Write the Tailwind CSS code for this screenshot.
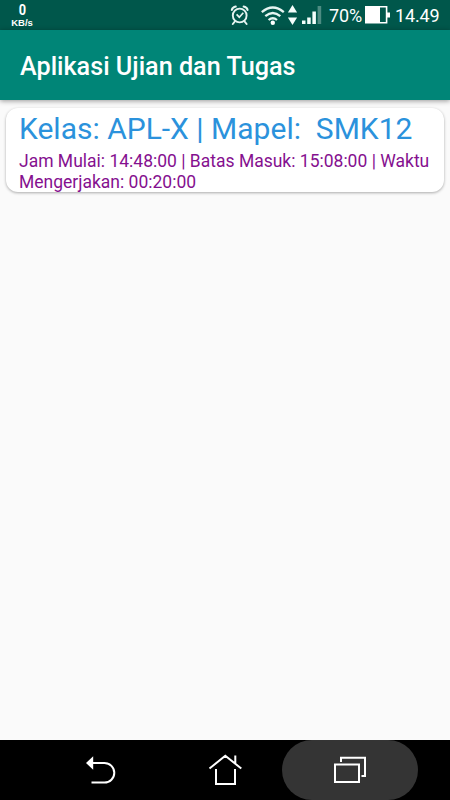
<!DOCTYPE html>
<html lang="id">
<head>
  <meta charset="UTF-8" />
  <meta name="viewport" content="width=device-width, initial-scale=1.0"/>
  <title>Aplikasi Ujian dan Tugas</title>

  <!-- Tailwind CSS -->
  <script src="https://cdn.jsdelivr.net/npm/@tailwindcss/browser@4"></script>

  <style>
    body {
      font-family: Roboto, "Liberation Sans", sans-serif;
    }
  </style>
</head>

<body class="h-screen flex flex-col overflow-hidden bg-[#fafafa]">
  <!-- Status bar -->
  <div class="h-[30px] shrink-0 bg-[#00574b] text-white flex justify-between items-start pl-[11px] pr-[10px]">
    <div class="w-[22px] pt-[3px] flex flex-col items-center font-bold">
      <span class="text-[15px] leading-[15px] scale-x-85">0</span>
      <span class="text-[9.5px] leading-[10px] whitespace-nowrap font-['Liberation_Sans']">KB/s</span>
    </div>

    <div class="h-[30px] flex items-center">
      <!-- Alarm, wifi, data, signal -->
      <svg class="w-[98px] h-[30px] shrink-0" viewBox="230 0 98 30" fill="none" stroke="#e6f4f1">
        <circle cx="239.7" cy="15.5" r="6.9" stroke-width="1.9"/>
        <path d="M231.8 10q.6-2.8 4-3.4M247.6 10q-.6-2.8-4-3.4M234.8 21.5l-2 2.5M244.6 21.5l2 2.5" stroke-width="2" stroke-linecap="round"/>
        <path d="M236.6 14.4l2.7 2.8 4-4.4" stroke-width="1.7"/>
        <path d="M261.8 12.2Q272.8 2.8 283.8 12.2M265.3 16.2Q272.8 9.8 280.3 16.2M268.6 20Q272.8 16.4 277 20" stroke-width="2.3"/>
        <circle cx="272.8" cy="22.8" r="2.2" fill="#fff" stroke="none"/>
        <path d="M292.5 5l4.6 7.5h-9.2zM292.5 25l4.6-7.5h-9.2z" fill="#f4fffc" stroke="none"/>
        <path d="M302 20.5h3.5V24H302zM307.2 17.5h3.5V24h-3.5zM312.4 11.5h3.5V24h-3.5z" fill="#f4fffc" stroke="none"/>
        <path d="M317.6 6h3.6v18h-3.6z" fill="#4d8c82" stroke="none"/>
      </svg>
      <span class="w-[37px] pl-[1px] text-[18px] leading-none pt-[1px] tracking-[-0.1px]">70%</span>
      <svg class="w-[26px] h-[30px] shrink-0" viewBox="365 0 26 30" fill="none">
        <path d="M365.8 6.8h20.8v15.9h-20.8z" stroke="#fff" stroke-width="1.6"/>
        <path d="M366 7h14v15.5h-14z" fill="#fff"/>
        <path d="M387 12.5h3v5h-3z" fill="#fff"/>
      </svg>
      <span class="w-[45px] ml-[4px] text-[18px] leading-none pt-[1px] tracking-[-0.15px] whitespace-nowrap">14.49</span>
    </div>
  </div>

  <!-- App bar -->
  <header class="h-[70px] shrink-0 bg-[#008577] text-white flex items-center px-5 pt-[4px] shadow-[0_1px_5px_rgba(0,0,0,0.4)]">
    <h1 class="text-[25.2px] font-medium leading-none whitespace-nowrap">Aplikasi Ujian dan Tugas</h1>
  </header>

  <main class="flex-1 px-[6px] pt-2">
    <!-- Exam card -->
    <section class="h-[84px] bg-white rounded-[12px] pl-[13px] pt-[3px] shadow-[0_1px_3px_rgba(0,0,0,0.32)]">
      <h2 class="text-[30px] leading-[36px] text-[#2b92dc] whitespace-pre">Kelas: APL-X | Mapel:  SMK12</h2>
      <p class="mt-[4px] text-[17.5px] leading-[20.5px] text-[#85108f] whitespace-nowrap">Jam Mulai: 14:48:00 | Batas Masuk: 15:08:00 | Waktu<br>Mengerjakan: 00:20:00</p>
    </section>
  </main>

  <!-- Navigation bar -->
  <nav class="h-[60px] shrink-0 bg-black flex">
    <button class="w-[168px] pl-[32px] flex justify-center items-center">
      <svg class="w-[34px] h-[34px]" viewBox="83 753 34 34" fill="none" stroke="#fff" stroke-width="2">
        <path d="M92 763h12.5a9.8 9.8 0 0 1 0 19.6H91.5"/>
        <path d="M86 763l7.2-6.7v13.4z" fill="#fff" stroke="none"/>
      </svg>
    </button>
    <button class="w-[114px] flex justify-center items-center">
      <svg class="w-[34px] h-[34px]" viewBox="208 753 34 34" fill="none" stroke="#fff" stroke-width="2">
        <path d="M209.5 768.5l15.8-12.7 16 12.7M235.3 755.5v8.5M216 769v15h19v-15"/>
      </svg>
    </button>
    <button class="w-[136px] h-[60px] rounded-[30px] bg-[#343434] flex justify-center items-center">
      <svg class="w-[34px] h-[34px]" viewBox="333 753 34 34" fill="none" stroke="#fff" stroke-width="2">
        <path d="M335 764.5h24v17.5h-24z"/>
        <path d="M341 762v-4.3h24v18.3h-3.5"/>
      </svg>
    </button>
  </nav>
</body>
</html>
